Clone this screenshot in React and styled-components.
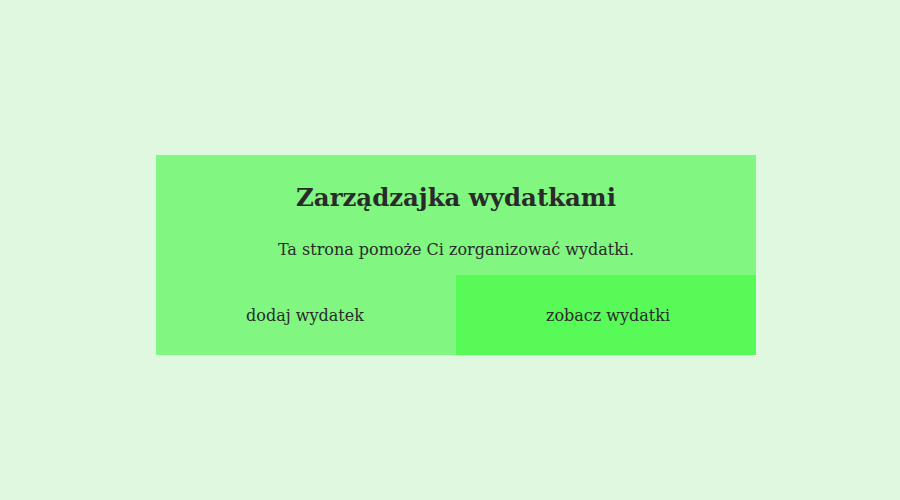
import React from "react";
import styled, { createGlobalStyle } from "styled-components";

const GlobalStyle = createGlobalStyle`
  html, body {
    margin: 0;
    padding: 0;
    height: 100%;
    background: #e0f8e0;
    font-family: "DejaVu Serif", serif;
    color: #2a2a2a;
  }
  #root {
    height: 100%;
  }
`;

const App = () => {
  return (
    <>
      <GlobalStyle />
      <Page>
        <Card>
          <Header>
            <Title>Zarządzajka wydatkami</Title>
            <Subtitle>Ta strona pomoże Ci zorganizować wydatki.</Subtitle>
          </Header>
          <Actions>
            <ActionButton>dodaj wydatek</ActionButton>
            <ActionButton active>zobacz wydatki</ActionButton>
          </Actions>
        </Card>
      </Page>
    </>
  );
};

export default App;

const Page = styled.div`
  height: 500px;
  box-sizing: border-box;
  padding-top: 10px;
  display: flex;
  align-items: center;
  justify-content: center;
`;

const Card = styled.div`
  width: 600px;
  height: 200px;
  margin-left: 12px;
  background-color: #81f781;
  display: flex;
  flex-direction: column;
`;

const Header = styled.div`
  height: 120px;
  display: flex;
  flex-direction: column;
  align-items: center;
  padding-top: 29px;
  box-sizing: border-box;
`;

const Title = styled.h1`
  margin: 0;
  font-size: 24.4px;
  font-weight: bold;
  line-height: 28px;
`;

const Subtitle = styled.p`
  margin: 28px 0 0;
  font-size: 16px;
  line-height: 19px;
`;

const Actions = styled.div`
  flex: 1;
  display: grid;
  grid-template-columns: 1fr 1fr;
`;

const ActionButton = styled.div`
  display: flex;
  align-items: center;
  justify-content: center;
  font-size: 16px;
  cursor: pointer;
  padding: ${(p) => (p.active ? "0 0 0 4px" : "0 2px 0 0")};
  background-color: ${(p) => (p.active ? "#58fa58" : "transparent")};
`;
